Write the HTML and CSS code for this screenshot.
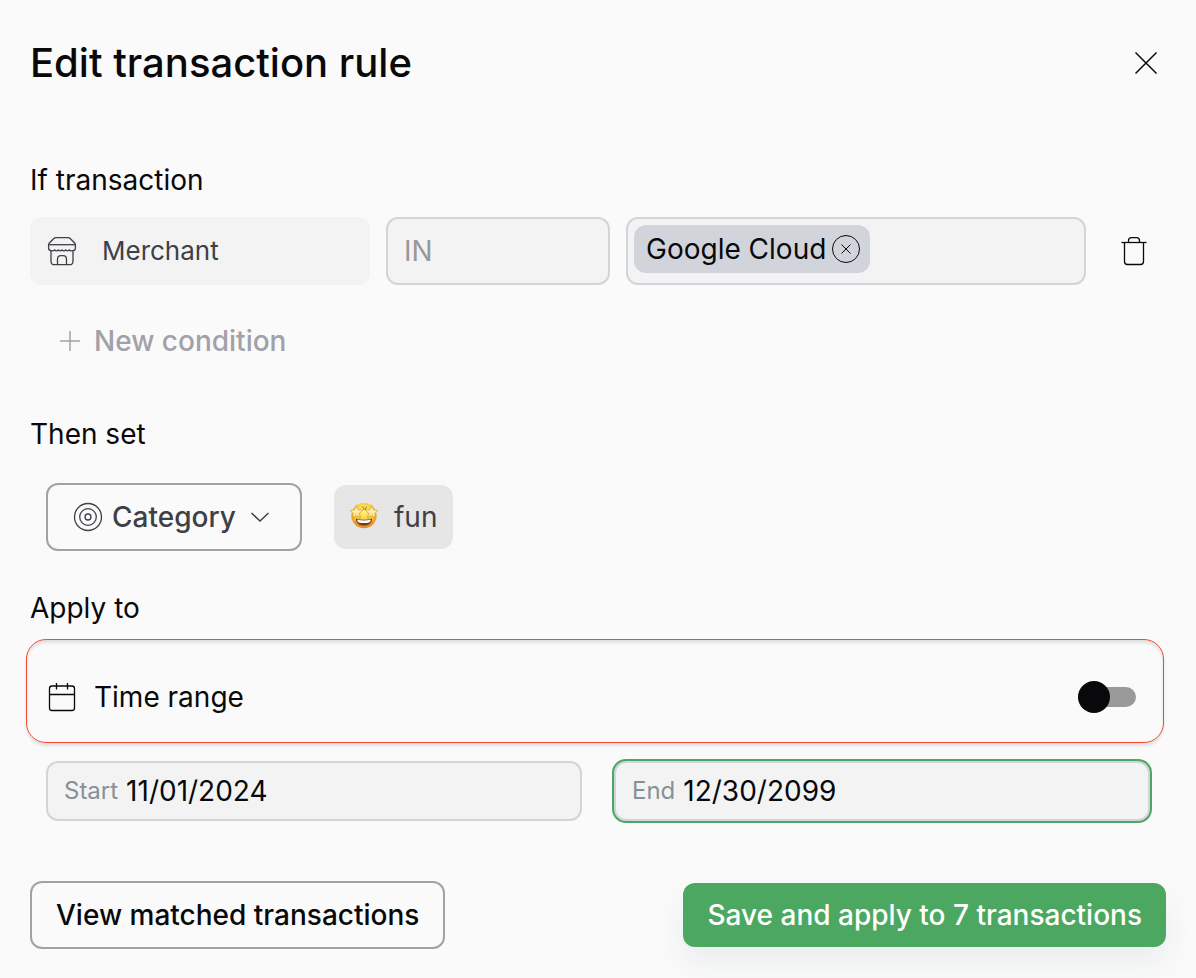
FILE: index.html
```html
<!DOCTYPE html>
<html lang="en">
  <head>
    <meta charset="UTF-8" />
    <meta name="viewport" content="width=device-width, initial-scale=1.0" />
    <title>Edit transaction rule</title>
    <link rel="stylesheet" href="styles.css">
  </head>
  <body>
    <form class="dialog">
      <header class="dialog-header">
        <h1>Edit transaction rule</h1>
        <button type="button" class="icon-button close-button" aria-label="Close">
          <svg class="icon" width="40" height="40" viewBox="0 0 40 40" stroke-width="1.5">
            <path d="M9.5 9.5l21 21M30.5 9.5l-21 21" />
          </svg>
        </button>
      </header>

      <section class="conditions">
        <h2>If transaction</h2>
        <div class="condition-row">
          <button type="button" class="field-button">
            <svg class="icon" width="32" height="32" viewBox="0 0 32 32" stroke-width="1.3">
              <path d="M10 2.700h12c1 0 1.700.300 2.400 1l4 4.100c.700.700 1 1.300 1 2.200v3.200c0 1.500-.8 2.300-2.400 2.300M10 2.700c-1 0-1.700.3-2.400 1L3.600 7.800c-.7.700-1 1.300-1 2.200v3.200c0 1.500.8 2.300 2.400 2.300" />
              <path d="M2.600 9.700h26.800" />
              <path d="M5 15.500c1.700.7 2.600.6 3.700-.5 1.300 1.200 2.400 1.200 3.700 0 1.300 1.200 2.400 1.200 3.600 0 1.300 1.200 2.400 1.200 3.700 0 1.300 1.200 2.400 1.200 3.600 0 1.100 1.100 2 1.200 3.700.5" />
              <path d="M5 15.500v10.700c0 2.300 1.200 3.500 3.500 3.500h15c2.300 0 3.500-1.200 3.500-3.500V15.500" />
              <path d="M11.500 29.700v-5.200c0-2.500 1.400-3.800 3.500-3.800h2c2.100 0 3.500 1.300 3.500 3.800v5.200" />
            </svg>
            Merchant
          </button>
          <input type="text" class="text-input" value="IN" aria-label="Operator" readonly />
          <div class="tag-input">
            <span class="tag">
              Google Cloud
              <button type="button" class="icon-button" aria-label="Remove Google Cloud">
                <svg class="icon" width="32" height="32" viewBox="0 0 32 32" stroke-width="1">
                  <circle cx="16" cy="16" r="13.500" />
                  <path d="M11.500 11.500l9 9M20.500 11.500l-9 9" />
                </svg>
              </button>
            </span>
            <input type="text" aria-label="Merchants" />
          </div>
          <button type="button" class="icon-button" aria-label="Delete condition">
            <svg class="icon" width="32" height="32" viewBox="0 0 32 32" stroke-width="1.3">
              <path d="M3.500 7.500h25" />
              <path d="M10.500 7.500V5.700c0-2 1-3 3-3h5c2 0 3 1 3 3v1.800" />
              <path d="M6.500 7.500v19c0 2 1 3 3 3h13c2 0 3-1 3-3v-19" />
            </svg>
          </button>
        </div>
        <button type="button" class="add-button">
          <svg class="icon" width="24" height="24" viewBox="0 0 24 24" stroke-width="1.5">
            <path d="M2 12h20M12 2v20" />
          </svg>
          New condition
        </button>
      </section>

      <section class="actions">
        <h2>Then set</h2>
        <div class="action-row">
          <label class="select-box">
            <svg class="icon" width="32" height="32" viewBox="0 0 32 32" stroke-width="1.3">
              <circle cx="16" cy="16" r="13.500" />
              <circle cx="16" cy="16" r="8.300" />
              <circle cx="16" cy="16" r="3" />
            </svg>
            <select aria-label="Field to set">
              <option>Category</option>
            </select>
            <svg class="icon" width="24" height="24" viewBox="0 0 24 24" stroke-width="1.5">
              <path d="M3.500 8l8.500 8 8.500-8" />
            </svg>
          </label>
          <button type="button" class="category-chip">
            <svg width="28" height="28" viewBox="0 0 28 28">
              <defs>
                <radialGradient id="face" cx="50%" cy="35%" r="65%">
                  <stop offset="0" stop-color="#fff27a" />
                  <stop offset="0.6" stop-color="#fbc737" />
                  <stop offset="1" stop-color="#e08428" />
                </radialGradient>
                <linearGradient id="star" x1="0" y1="0" x2="0" y2="1">
                  <stop offset="0" stop-color="#fffbe0" />
                  <stop offset="1" stop-color="#ffdc66" />
                </linearGradient>
              </defs>
              <circle cx="14" cy="12.500" r="12.700" fill="url(#face)" />
              <path d="M6 15.500c5 1.600 11 1.600 16 0 .6 4-2.700 7.200-8 7.200s-8.600-3.200-8-7.200z" fill="#7a3b12" />
              <path d="M7.200 16.600c4.300 1.200 9.300 1.200 13.600 0 0 1.500-.6 2.400-1.400 2.900-3.600.8-7.200.8-10.800 0-.8-.5-1.400-1.400-1.400-2.900z" fill="#fff" />
              <path d="M12.300 3.800c1.200.6 1.700 1.600 1.700 3M17 3.800c-1.200.6-1.700 1.600-1.700 3" fill="none" stroke="#a8641c" />
              <g fill="url(#star)" stroke="#c98a2c" stroke-width="0.6" stroke-linejoin="round">
                <path d="M6 2.500l2 4.200 4.900.300-3.500 3.300 1 4.500-4.100-2-3.900 2.200.6-4.500L.3 7.600l4.400-.9z" />
                <path d="M22 2.500l1.300 4.200 4.400.9-2.700 2.900.6 4.500-3.900-2.200-4.100 2 1-4.500-3.500-3.300 4.900-.3z" />
              </g>
            </svg>
            fun
          </button>
        </div>
      </section>

      <section class="apply-to">
        <h2>Apply to</h2>
        <div class="time-range">
          <svg class="icon" width="32" height="32" viewBox="0 0 32 32" stroke-width="1.3">
            <rect x="3.500" y="5" width="25" height="24.500" rx="2.500" />
            <path d="M3.500 13.500h25M10.500 2v6.500M21.500 2v6.500" />
          </svg>
          <label for="timeRange">Time range</label>
          <input type="checkbox" role="switch" id="timeRange" class="switch" />
        </div>
        <div class="date-row">
          <label class="date-field">
            <span>Start</span>
            <input type="text" value="11/01/2024" />
          </label>
          <label class="date-field active">
            <span>End</span>
            <input type="text" value="12/30/2099" />
          </label>
        </div>
      </section>

      <footer class="dialog-footer">
        <button type="button" class="button outline">View matched transactions</button>
        <button type="submit" class="button primary">Save and apply to 7 transactions</button>
      </footer>
    </form>
  </body>
</html>
```

FILE: styles.css
```css
* {
  box-sizing: border-box;
}

body {
  margin: 0;
  background-color: #fafafa;
  color: #09090b;
  font-family: "Inter", sans-serif;
  font-size: 28px;
  line-height: 40px;
}

button,
input,
select {
  margin: 0;
  padding: 0;
  border: none;
  background: none;
  color: inherit;
  font: inherit;
  min-width: 0;
}

button,
select {
  cursor: pointer;
}

input:focus,
select:focus {
  outline: none;
}

.icon {
  display: block;
  flex-shrink: 0;
  fill: none;
  stroke: currentColor;
}

.dialog {
  padding: 30px;
}

.dialog-header {
  display: flex;
  justify-content: space-between;
  align-items: center;
  height: 66px;
  margin-bottom: 64px;
}

h1 {
  margin: 0;
  font-size: 40px;
  font-weight: 500;
}

h2 {
  margin: 0;
  font-size: 28px;
  font-weight: 400;
}

.icon-button {
  display: flex;
  justify-content: center;
  align-items: center;
}

/* Conditions */
.condition-row {
  display: grid;
  grid-template-columns: 340px 224px minmax(0, 1fr) 64px;
  gap: 16px;
  height: 68px;
  margin-top: 17px;
}

.field-button {
  display: flex;
  align-items: center;
  gap: 24px;
  padding: 0 16px;
  border-radius: 12px;
  background-color: #f3f3f3;
  color: #3f3f46;
  font-size: 26px;
}

.text-input,
.tag-input,
.date-field {
  border: 2px solid #d1d5db;
  border-radius: 12px;
  background-color: #f3f3f3;
}

.text-input {
  padding: 0 16px;
  color: #999999;
}

.tag-input {
  display: flex;
  align-items: flex-start;
  padding: 6px;
}

.tag-input input {
  flex: 1;
}

.tag {
  display: flex;
  align-items: center;
  gap: 4px;
  height: 48px;
  padding: 0 8px 0 12px;
  border-radius: 12px;
  background-color: #d1d5db;
  white-space: nowrap;
}

.add-button {
  display: flex;
  align-items: center;
  gap: 12px;
  margin: 36px 28px 0;
  color: #a1a1aa;
  font-weight: 500;
}

/* Actions */
.actions {
  margin-top: 53px;
}

.action-row {
  display: flex;
  align-items: center;
  gap: 32px;
  margin: 29px 16px 0;
}

.select-box {
  display: flex;
  align-items: center;
  gap: 8px;
  height: 68px;
  padding: 0 28px 0 24px;
  border: 2px solid #a1a1aa;
  border-radius: 12px;
  color: #3f3f46;
  font-weight: 500;
}

.select-box select {
  margin-right: 4px;
  appearance: none;
}

.category-chip {
  display: flex;
  align-items: center;
  gap: 16px;
  height: 64px;
  padding: 0 16px;
  border-radius: 12px;
  background-color: #e6e6e6;
  color: #3f3f46;
}

/* Apply to */
.apply-to {
  margin-top: 37px;
}

.time-range {
  display: flex;
  align-items: center;
  gap: 16px;
  height: 104px;
  margin: 11px 2px 0 -4px;
  padding: 12px 27px 0 19px;
  border: 1px solid #f04a32;
  border-radius: 20px;
  box-shadow: 0 3px 3px rgba(0, 0, 0, 0.1), inset 0 3px 3px rgba(0, 0, 0, 0.1);
}

.switch {
  display: grid;
  align-items: center;
  width: 58px;
  margin-left: auto;
  appearance: none;
  cursor: pointer;
}

.switch::before,
.switch::after {
  content: "";
  grid-area: 1 / 1;
}

.switch::before {
  height: 20px;
  border-radius: 10px;
  background-color: #9a9a9a;
}

.switch::after {
  width: 32px;
  height: 32px;
  border-radius: 50%;
  background-color: #09090b;
}

.switch:checked::after {
  justify-self: end;
}

.date-row {
  display: grid;
  grid-template-columns: 1fr 1fr;
  gap: 32px;
  margin: 18px 16px 0;
}

.date-field {
  display: flex;
  align-items: center;
  gap: 8px;
  height: 60px;
  padding: 0 16px;
}

.date-field span {
  color: #889096;
  font-size: 24px;
}

.date-field input {
  flex: 1;
}

.date-field.active {
  box-shadow: 0 0 0 2px #4ca860;
}

/* Footer */
.dialog-footer {
  display: flex;
  justify-content: space-between;
  align-items: center;
  margin-top: 60px;
}

.button {
  height: 64px;
  padding: 0 24px;
  border-radius: 12px;
  font-weight: 500;
}

.button.outline {
  height: 68px;
  border: 2px solid #a1a1aa;
}

.button.primary {
  background-color: #4ca860;
  color: white;
  box-shadow: 0 16px 32px rgba(17, 50, 80, 0.07);
}
```
